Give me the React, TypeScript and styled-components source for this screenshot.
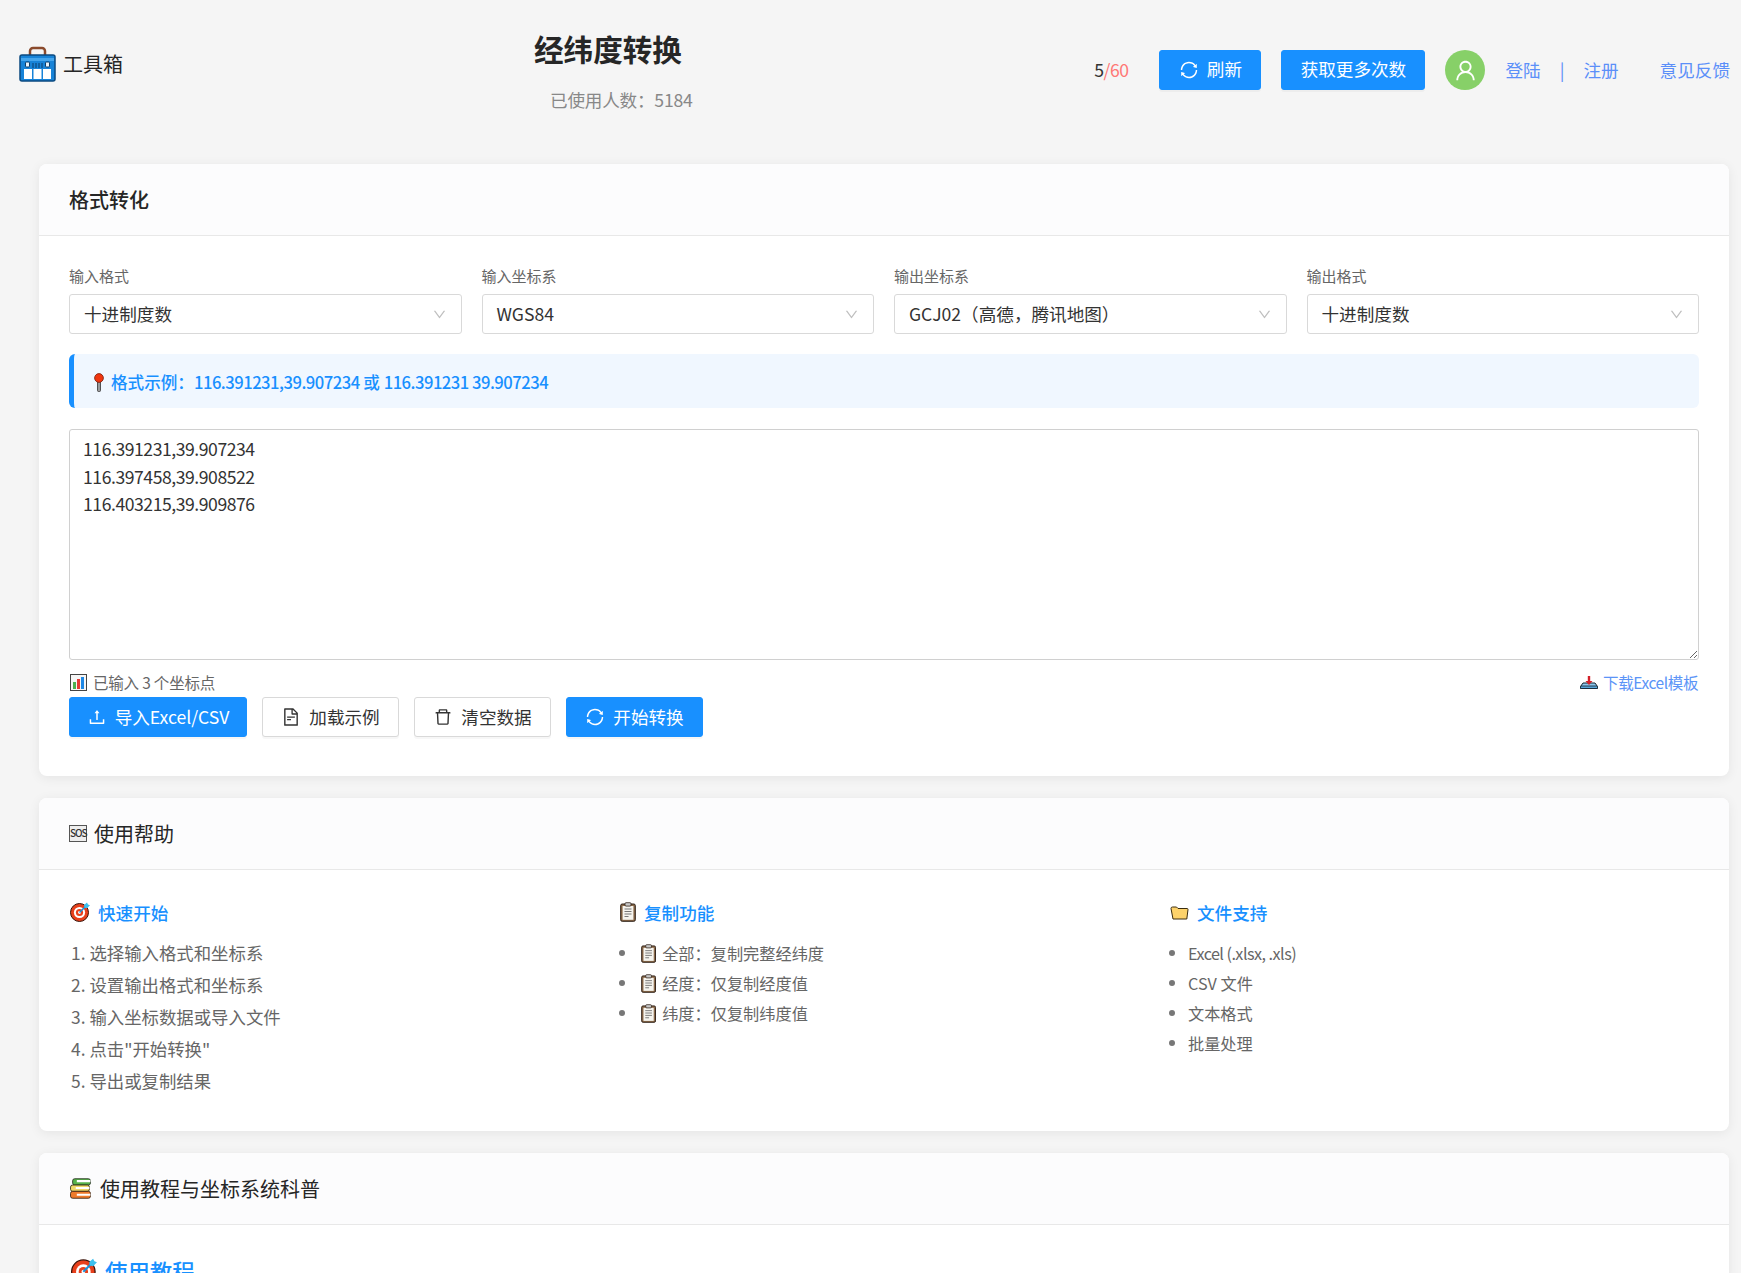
import React from 'react'
import styled, { createGlobalStyle } from 'styled-components'
import {
  AiOutlineDelete,
  AiOutlineDown,
  AiOutlineFileText,
  AiOutlineSync,
  AiOutlineUpload,
  AiOutlineUser,
} from 'react-icons/ai'

const GlobalStyle = createGlobalStyle`
  html, body {
    margin: 0;
    height: 1273px;
    overflow: hidden;
    background: #f5f5f5;
  }
  body {
    font-family: "Noto Sans CJK SC", "Noto Sans", sans-serif;
    color: #333;
  }
  * { box-sizing: border-box; }
`

const Header = styled.header`
  display: flex;
  height: 164px;
  padding: 0 11px 0 19px;
`

const Logo = styled.div`
  display: flex;
  align-items: center;
  gap: 7px;
  width: 516px;
  height: 36px;
  margin-top: 45px;
  font-size: 20px;
  color: #262626;
  svg {
    margin-top: 1px;
  }
`

const TitleBlock = styled.div`
  width: 172px;
  text-align: left;
`

const Title = styled.h1`
  margin: 28px 0 0 -1px;
  width: 149px;
  font-size: 29.6px;
  line-height: 42px;
  font-weight: 700;
  white-space: nowrap;
  color: #262626;
`

const UsedCount = styled.div`
  margin: 18px 0 0 15px;
  font-size: 17.6px;
  line-height: 24px;
  letter-spacing: -0.2px;
  color: #888;
  white-space: nowrap;
`

const Actions = styled.div`
  display: flex;
  align-items: center;
  margin: 50px 0 0 auto;
  height: 40px;
  padding-bottom: 1px;
  font-size: 17.6px;
`

const Quota = styled.span`
  margin-right: 31px;
  letter-spacing: -0.5px;
  color: #333;
  em {
    font-style: normal;
    color: #ff7875;
  }
`

const Button = styled.button<{ $primary?: boolean; $width: number }>`
  display: inline-flex;
  align-items: center;
  justify-content: center;
  gap: 8px;
  width: ${(p) => p.$width}px;
  height: 40px;
  padding: 0 0 2px;
  border: 1px solid ${(p) => (p.$primary ? '#1890ff' : '#d9d9d9')};
  border-radius: 3px;
  background: ${(p) => (p.$primary ? '#1890ff' : '#fff')};
  color: ${(p) => (p.$primary ? '#fff' : '#333')};
  font-family: inherit;
  font-size: 17.6px;
  white-space: nowrap;
  box-shadow: 0 2px 0 rgba(0, 0, 0, 0.03);
  svg {
    font-size: 20px;
    flex: none;
    margin-top: 2px;
  }
`

const MoreButton = styled(Button)`
  margin-left: 20px;
`

const Avatar = styled.div`
  display: flex;
  align-items: center;
  justify-content: center;
  width: 40px;
  height: 40px;
  margin: 1px 20px 0;
  border-radius: 50%;
  background: #87d068;
  color: #fff;
  font-size: 25px;
`

const NavLink = styled.a<{ $gap?: number }>`
  margin-left: ${(p) => p.$gap || 0}px;
  color: #5b8ff9;
  white-space: nowrap;
`

const Main = styled.main`
  display: flex;
  flex-direction: column;
  gap: 22px;
  padding: 0 12px 0 39px;
`

const Card = styled.section`
  border-radius: 8px;
  background: #fff;
  box-shadow: 0 2px 12px rgba(0, 0, 0, 0.07);
`

const CardHeader = styled.div<{ $weight?: number; $gap?: number }>`
  display: flex;
  align-items: center;
  gap: ${(p) => p.$gap || 7}px;
  height: 72px;
  padding: 0 30px;
  border-bottom: 1px solid #e8e8e8;
  border-radius: 8px 8px 0 0;
  background: #fcfcfd;
  font-size: 20px;
  font-weight: ${(p) => p.$weight || 500};
  color: #262626;
`

const CardBody = styled.div<{ $padding: string }>`
  padding: ${(p) => p.$padding};
`

const FieldRow = styled.div`
  display: grid;
  grid-template-columns: repeat(4, 1fr);
  gap: 20px;
`

const FieldLabel = styled.label`
  display: block;
  margin-bottom: 8px;
  font-size: 15px;
  line-height: 20px;
  color: #666;
`

const Select = styled.div`
  display: flex;
  align-items: center;
  justify-content: space-between;
  height: 40px;
  padding: 0 14px 2px 14px;
  border: 1px solid #d9d9d9;
  border-radius: 3px;
  background: #fff;
  font-size: 17.6px;
  color: #333;
  svg {
    font-size: 15px;
    margin-top: 2px;
    color: #bfbfbf;
  }
`

const Alert = styled.div`
  display: flex;
  align-items: center;
  gap: 6px;
  height: 54px;
  margin: 20px 0 21px;
  padding: 2px 0 0 19px;
  border-left: 5px solid #1890ff;
  border-radius: 6px;
  background: #f0f7ff;
  font-size: 16.6px;
  font-weight: 500;
  color: #1890ff;
`

const Latin = styled.span<{ $tight: number }>`
  letter-spacing: ${(p) => p.$tight}px;
`

const CoordInput = styled.textarea`
  display: block;
  width: 100%;
  height: 231px;
  padding: 5px 13px;
  border: 1px solid #d0d0d0;
  border-radius: 3px;
  outline: none;
  resize: vertical;
  font-family: inherit;
  font-size: 17.6px;
  line-height: 27.5px;
  letter-spacing: -0.45px;
  color: #333;
`

const StatusRow = styled.div`
  display: flex;
  align-items: center;
  justify-content: space-between;
  height: 37px;
  padding-top: 7px;
  font-size: 15.5px;
  color: #666;
`

const StatusText = styled.span`
  display: inline-flex;
  align-items: center;
  gap: 6px;
  letter-spacing: -0.2px;
  svg {
    margin-left: 1px;
  }
`

const TemplateLink = styled.a`
  display: inline-flex;
  align-items: center;
  gap: 5px;
  color: #5b94f7;
  margin-right: 1px;
  letter-spacing: -0.4px;
`

const ButtonRow = styled.div`
  display: flex;
  gap: 15px;
`

const HelpGrid = styled.div`
  display: grid;
  grid-template-columns: repeat(3, 1fr);
  gap: 20px;
  height: 232px;
`

const ColumnTitle = styled.h4`
  display: flex;
  align-items: center;
  gap: 8px;
  margin: 0 0 13px;
  padding-left: 1px;
  height: 26px;
  font-size: 17.6px;
  font-weight: 500;
  color: #1890ff;
`

const StepList = styled.ol`
  margin: -1px 0 0;
  padding: 0 0 0 2px;
  list-style: none;
`

const Step = styled.li`
  height: 32px;
  line-height: 32px;
  font-size: 17.4px;
  color: #666;
`

const BulletList = styled.ul`
  margin: 0;
  padding: 0;
  list-style: none;
`

const Bullet = styled.li`
  display: flex;
  align-items: center;
  height: 30px;
  font-size: 16.2px;
  color: #666;
  &::before {
    content: '';
    flex: none;
    width: 6px;
    height: 6px;
    margin: 0 13px 0 0;
    border-radius: 50%;
    background: #777;
  }
  svg {
    margin: 0 6px 0 3px;
  }
`

const SosBadge = styled.span`
  display: inline-block;
  flex: none;
  width: 18px;
  height: 17px;
  border: 1px solid #555;
  background: #eee;
  font-size: 10px;
  line-height: 14px;
  font-weight: 500;
  text-align: center;
  letter-spacing: -1px;
  color: #333;
`

const TutorialTitle = styled.h3`
  display: flex;
  align-items: center;
  gap: 8px;
  margin: 0;
  padding-left: 2px;
  font-size: 22.4px;
  line-height: 30px;
  font-weight: 500;
  color: #1890ff;
`

const ToolboxIcon = () => (
  <svg width="37" height="36" viewBox="0 0 37 36">
    <path d="M11 11V5a3 3 0 0 1 3-3h9a3 3 0 0 1 3 3v6" fill="none" stroke="#8a4a2c" strokeWidth="2.5" />
    <rect x="1" y="9" width="35" height="26" rx="2" fill="#1783d8" stroke="#0b4a80" strokeWidth="1.5" />
    <rect x="2" y="12" width="33" height="3" fill="#45a5ec" />
    <rect x="5" y="23" width="8" height="10" fill="#fff" />
    <rect x="14.5" y="23" width="8" height="10" fill="#fff" />
    <rect x="24" y="23" width="8" height="10" fill="#fff" />
    <rect x="6.5" y="16" width="4" height="5" rx="1" fill="#e8f3fb" stroke="#0b3d6b" />
    <rect x="26.5" y="16" width="4" height="5" rx="1" fill="#e8f3fb" stroke="#0b3d6b" />
    <path d="M14 17v5M17 17v5M20 17v5M23 17v5" stroke="#0b3d6b" strokeWidth="1" />
  </svg>
)

const PinIcon = () => (
  <svg width="12" height="19" viewBox="0 0 12 19">
    <rect x="4.5" y="8" width="3" height="10.5" rx="1" fill="#9a9a9a" stroke="#333" strokeWidth="0.8" />
    <circle cx="6" cy="5" r="4.4" fill="#f0360f" stroke="#7a1a08" strokeWidth="0.8" />
  </svg>
)

const ChartIcon = () => (
  <svg width="17" height="17" viewBox="0 0 17 17">
    <rect x="0.5" y="0.5" width="16" height="16" fill="#f6f6f6" stroke="#444" />
    <rect x="3" y="8" width="3" height="7" fill="#4caf50" />
    <rect x="7" y="5" width="3" height="10" fill="#e53935" />
    <rect x="11" y="3" width="3" height="12" fill="#1e88e5" />
  </svg>
)

const TrayIcon = () => (
  <svg width="18" height="14" viewBox="0 0 18 14">
    <path d="M3 8h12l2.5 3.5v2h-17v-2z" fill="#8cc8ee" stroke="#13202c" strokeWidth="1" />
    <rect x="0.5" y="11" width="17" height="2.5" rx="1" fill="#5aa5d8" stroke="#13202c" strokeWidth="0.8" />
    <path d="M9 1v6" stroke="#d32029" strokeWidth="2.4" />
    <path d="M5.5 6H12.5L9 10z" fill="#d32029" />
  </svg>
)

const TargetIcon = ({ size = 20 }: { size?: number }) => (
  <svg width={size} height={size} viewBox="0 0 20 20">
    <circle cx="9.5" cy="10.5" r="9" fill="#e8401c" stroke="#3a1208" strokeWidth="1" />
    <circle cx="9.5" cy="10.5" r="5.6" fill="#fff" />
    <circle cx="9.5" cy="10.5" r="3.6" fill="#e8401c" />
    <circle cx="9.5" cy="10.5" r="1.4" fill="#fff" />
    <path d="M9.5 10.5 16 4" stroke="#1a8fd8" strokeWidth="1.6" />
    <path d="M14 3l3-2.5 1 2 2 .8-3 3-2.5-.6z" fill="#3cc0ef" />
  </svg>
)

const ClipboardIcon = ({ size = 20 }: { size?: number }) => (
  <svg width={size * 0.8} height={size} viewBox="0 0 16 20">
    <rect x="0.7" y="2" width="14.6" height="17.3" rx="1.5" fill="#8b6a4a" stroke="#2e2118" strokeWidth="1" />
    <rect x="2.6" y="4" width="10.8" height="13.8" fill="#f6f4ee" />
    <rect x="5" y="0.7" width="6" height="3.4" rx="1" fill="#c9c9c9" stroke="#2e2118" strokeWidth="0.8" />
    <path d="M4.5 7h7M4.5 9.5h7M4.5 12h7M4.5 14.5h4" stroke="#777" strokeWidth="1" />
  </svg>
)

const FolderIcon = () => (
  <svg width="19" height="15" viewBox="0 0 19 15">
    <path d="M1 3.5a1.5 1.5 0 0 1 1.5-1.5h4l1.5 1.5h9a1 1 0 0 1 1 1L16.8 14H3z" fill="#fdd26a" stroke="#3a2c10" strokeWidth="1" />
  </svg>
)

const BooksIcon = () => (
  <svg width="23" height="21" viewBox="0 0 21 20">
    <rect x="3" y="0.7" width="17" height="6" rx="2" fill="#57b34a" stroke="#26301f" strokeWidth="0.8" />
    <rect x="1" y="6.7" width="18" height="6" rx="2" fill="#f0d96a" stroke="#2f2a14" strokeWidth="0.8" />
    <rect x="1" y="12.7" width="19" height="6.6" rx="2" fill="#ef7a2a" stroke="#35200f" strokeWidth="0.8" />
    <path d="M7 3h13M6 9.5h13M7 16h13" stroke="#fff" strokeWidth="2" />
  </svg>
)

const fields = [
  { label: '输入格式', value: '十进制度数' },
  { label: '输入坐标系', value: 'WGS84' },
  { label: '输出坐标系', value: 'GCJ02（高德，腾讯地图）' },
  { label: '输出格式', value: '十进制度数' },
]

const steps = [
  '1. 选择输入格式和坐标系',
  '2. 设置输出格式和坐标系',
  '3. 输入坐标数据或导入文件',
  '4. 点击"开始转换"',
  '5. 导出或复制结果',
]

const copyItems = ['全部：复制完整经纬度', '经度：仅复制经度值', '纬度：仅复制纬度值']

const sample = '116.391231,39.907234\n116.397458,39.908522\n116.403215,39.909876'

export default function App() {
  return (
    <>
      <GlobalStyle />
      <Header>
        <Logo>
          <ToolboxIcon />
          工具箱
        </Logo>
        <TitleBlock>
          <Title>经纬度转换</Title>
          <UsedCount>已使用人数：5184</UsedCount>
        </TitleBlock>
        <Actions>
          <Quota>
            5<em>/60</em>
          </Quota>
          <Button $primary $width={102}>
            <AiOutlineSync />
            刷新
          </Button>
          <MoreButton $primary $width={144}>
            获取更多次数
          </MoreButton>
          <Avatar>
            <AiOutlineUser />
          </Avatar>
          <NavLink>登陆</NavLink>
          <NavLink $gap={19}>|</NavLink>
          <NavLink $gap={19}>注册</NavLink>
          <NavLink $gap={41}>意见反馈</NavLink>
        </Actions>
      </Header>
      <Main>
        <Card>
          <CardHeader>格式转化</CardHeader>
          <CardBody $padding="30px 30px 39px">
            <FieldRow>
              {fields.map((f) => (
                <div key={f.label}>
                  <FieldLabel>{f.label}</FieldLabel>
                  <Select>
                    {f.value}
                    <AiOutlineDown />
                  </Select>
                </div>
              ))}
            </FieldRow>
            <Alert>
              <PinIcon />
              <span>
                格式示例：<Latin $tight={-0.5}>116.391231,39.907234</Latin> 或{' '}
                <Latin $tight={-0.5}>116.391231 39.907234</Latin>
              </span>
            </Alert>
            <CoordInput defaultValue={sample} />
            <StatusRow>
              <StatusText>
                <ChartIcon />
                已输入 3 个坐标点
              </StatusText>
              <TemplateLink>
                <TrayIcon />
                下载Excel模板
              </TemplateLink>
            </StatusRow>
            <ButtonRow>
              <Button $primary $width={178}>
                <AiOutlineUpload />
                导入Excel/CSV
              </Button>
              <Button $width={137}>
                <AiOutlineFileText />
                加载示例
              </Button>
              <Button $width={137}>
                <AiOutlineDelete />
                清空数据
              </Button>
              <Button $primary $width={137}>
                <AiOutlineSync />
                开始转换
              </Button>
            </ButtonRow>
          </CardBody>
        </Card>
        <Card>
          <CardHeader $weight={400}>
            <SosBadge>SOS</SosBadge>
            使用帮助
          </CardHeader>
          <CardBody $padding="29px 30px 0">
            <HelpGrid>
              <div>
                <ColumnTitle>
                  <TargetIcon />
                  快速开始
                </ColumnTitle>
                <StepList>
                  {steps.map((s) => (
                    <Step key={s}>{s}</Step>
                  ))}
                </StepList>
              </div>
              <div>
                <ColumnTitle>
                  <ClipboardIcon />
                  复制功能
                </ColumnTitle>
                <BulletList>
                  {copyItems.map((s) => (
                    <Bullet key={s}>
                      <ClipboardIcon size={19} />
                      {s}
                    </Bullet>
                  ))}
                </BulletList>
              </div>
              <div>
                <ColumnTitle>
                  <FolderIcon />
                  文件支持
                </ColumnTitle>
                <BulletList>
                  <Bullet>
                    <Latin $tight={-0.55}>Excel (.xlsx, .xls)</Latin>
                  </Bullet>
                  <Bullet>CSV 文件</Bullet>
                  <Bullet>文本格式</Bullet>
                  <Bullet>批量处理</Bullet>
                </BulletList>
              </div>
            </HelpGrid>
          </CardBody>
        </Card>
        <Card>
          <CardHeader $weight={400} $gap={8}>
            <BooksIcon />
            使用教程与坐标系统科普
          </CardHeader>
          <CardBody $padding="31px 30px 0">
            <TutorialTitle>
              <TargetIcon size={26} />
              使用教程
            </TutorialTitle>
          </CardBody>
        </Card>
      </Main>
    </>
  )
}
